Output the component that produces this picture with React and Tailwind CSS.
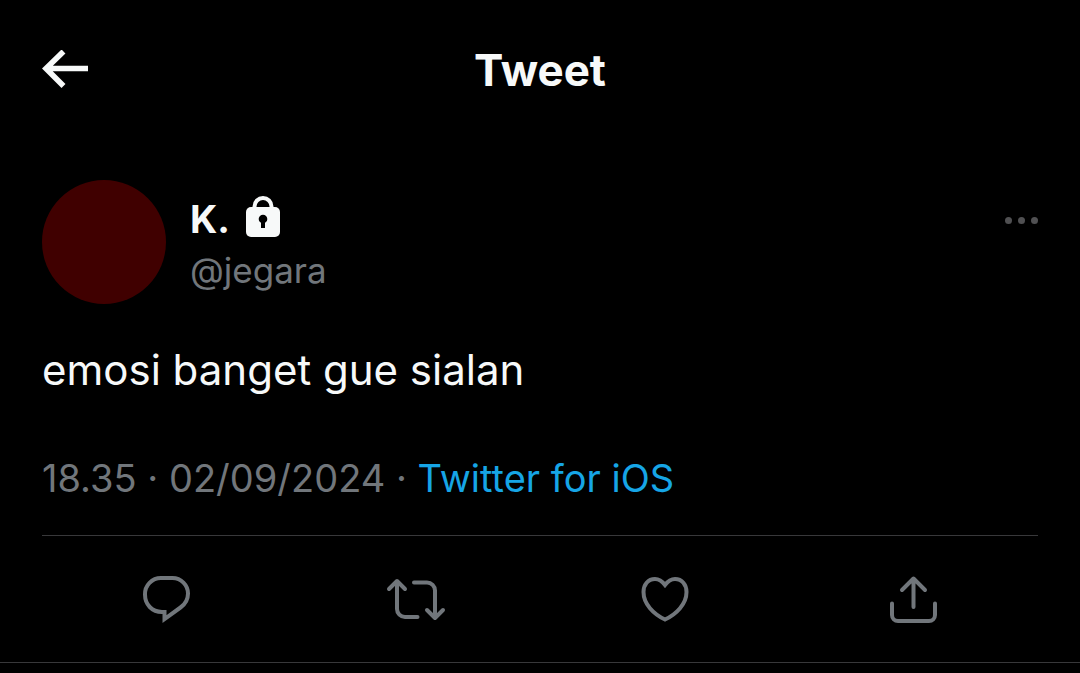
const actions = [
    {
        label: 'Reply',
        path: 'M24 8H35.5A15.5 15.5 0 0 1 51 23.5C51 29.5 48.5 34 43.5 37.5L27.5 49V42H25C15 42 8 34.5 8 24.5A16 16 0 0 1 24 8Z',
        join: 'miter'
    },
    {
        label: 'Retweet',
        path: 'M3 19L11 11L19 19M11 12V39A8 8 0 0 0 19 47H31.5M28 12.5H41A8 8 0 0 1 49 20.5V47M41 40L49 48L57 40',
        join: 'round'
    },
    {
        label: 'Like',
        path: 'M30 15C27 11 24 9 20 9C13 9 8.5 14.5 8.5 22C8.5 34 18.5 44 30 49.5C41.5 44 51.5 34 51.5 22C51.5 14.5 47 9 40 9C36 9 33 11 30 15Z',
        join: 'miter'
    },
    {
        label: 'Share',
        path: 'M18 20L29.5 8.5L41 20M29.5 9V37M8 33.5V45A6 6 0 0 0 14 51H45A6 6 0 0 0 51 45V33.5',
        join: 'round'
    }
];

const LockIcon = () => (
    <svg className="h-[46px] w-[34px]" viewBox="0 0 34 46" role="img" aria-label="Protected account">
        <path d="M8.5 13V10.5A8.5 8.5 0 0 1 25.5 10.5V13" fill="none" stroke="#f7f9f9" strokeWidth="4" />
        <rect x="0" y="11" width="34" height="30" rx="5" fill="#f7f9f9" />
        <circle cx="17" cy="23" r="4.3" fill="#000" />
        <path d="M15 24H19V32H15Z" fill="#000" />
    </svg>
);

const App = () => {
    return (
        <div className="min-h-screen bg-black font-['Inter',sans-serif] text-[#f7f9f9]">
            <header className="grid grid-cols-[1fr_auto_1fr] items-center px-[42px] pt-10">
                <button type="button" aria-label="Back" className="w-12">
                    <svg className="h-10 w-12" viewBox="0 0 48 40" fill="none" stroke="currentColor" strokeWidth="5.6">
                        <path d="M21.5 1.5L4 18.5L21.5 36M5 18.5H46" />
                    </svg>
                </button>
                <h1 className="text-[44px] leading-[60px] font-bold">Tweet</h1>
            </header>

            <main>
                <article>
                    <div className="flex px-[42px] pt-20">
                        <div className="size-[124px] shrink-0 rounded-full bg-[#400000]" />
                        <div className="ml-6 grow pt-4">
                            <div className="flex items-center gap-4 text-[38px] leading-[46px] font-bold">
                                <span>K.</span>
                                <LockIcon />
                            </div>
                            <p className="text-[35px] leading-[56px] text-[#71767b]">@jegara</p>
                        </div>
                        <button type="button" aria-label="More" className="mt-8 h-4 w-9">
                            <svg className="h-4 w-9" viewBox="0 0 36 16" fill="#505052">
                                <circle cx="6.5" cy="8.5" r="3.5" />
                                <circle cx="19.5" cy="8.5" r="3.5" />
                                <circle cx="32.5" cy="8.5" r="3.5" />
                            </svg>
                        </button>
                    </div>

                    <p className="px-[42px] pt-9 text-[42px] leading-[60px]">emosi banget gue sialan</p>

                    <div className="mx-[42px] border-b border-[#38383a] pt-[52px] pb-[31px] text-[38px] leading-[52px] text-[#71767b]">
                        <time dateTime="2024-09-02T18:35">18.35 · 02/09/2024</time> ·{' '}
                        <a href="#source" className="text-[#16a5e6]">Twitter for iOS</a>
                    </div>

                    <div className="border-b border-[#38383a] px-[42px] pt-[34px] pb-8">
                        <div className="grid grid-cols-4 justify-items-center">
                            {actions.map(action => (
                                <button key={action.label} type="button" aria-label={action.label}>
                                    <svg
                                        className="size-[60px]"
                                        viewBox="0 0 60 60"
                                        fill="none"
                                        stroke="#71767b"
                                        strokeWidth="4"
                                        strokeLinecap="round"
                                        strokeLinejoin={action.join}
                                    >
                                        <path d={action.path} />
                                    </svg>
                                </button>
                            ))}
                        </div>
                    </div>
                </article>
            </main>
        </div>
    );
};

export default App;
